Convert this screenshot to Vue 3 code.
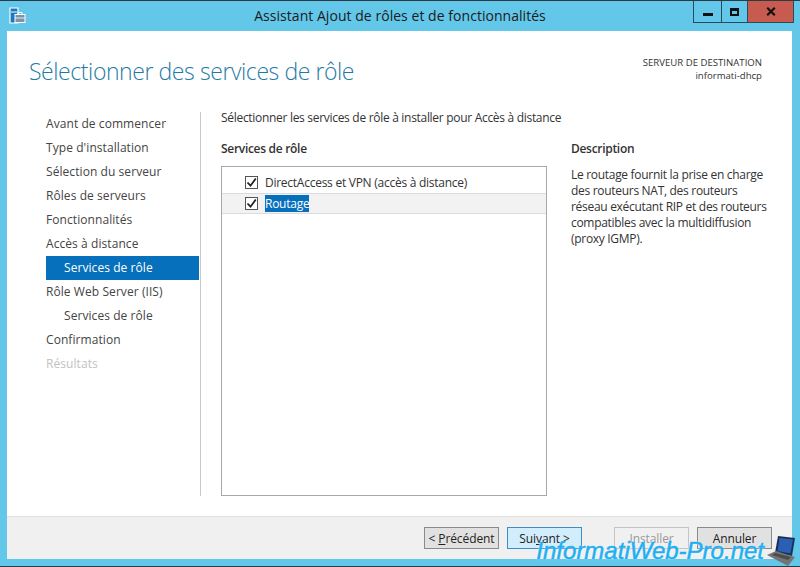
<script setup>
const steps = [
  { label: "Avant de commencer" },
  { label: "Type d'installation" },
  { label: "Sélection du serveur" },
  { label: "Rôles de serveurs" },
  { label: "Fonctionnalités" },
  { label: "Accès à distance" },
  { label: "Services de rôle", sub: true, active: true },
  { label: "Rôle Web Server (IIS)" },
  { label: "Services de rôle", sub: true },
  { label: "Confirmation" },
  { label: "Résultats", off: true }
];
</script>

<template>
  <div class="window">
    <header class="titlebar">
      <svg class="appicon" width="17" height="17" viewBox="0 0 17 17">
        <path d="M1 1h8v15H1z" fill="#1a78c4" stroke="#fff" stroke-width="1.2"/>
        <path d="M2 5h6" stroke="#fff" stroke-width="1"/>
        <rect x="6" y="7.5" width="10" height="8" fill="#7d94a8" stroke="#fff" stroke-width="1"/>
        <path d="M9 7.500V5.500h4v2" fill="none" stroke="#fff" stroke-width="1"/>
        <path d="M6 11h10" stroke="#fff" stroke-width=".8"/>
      </svg>
      <div class="wintitle">Assistant Ajout de rôles et de fonctionnalités</div>
      <div class="controls">
        <div class="ctl"><span class="min"></span></div>
        <div class="ctl"><span class="max"></span></div>
        <div class="ctl close">
          <svg width="10" height="9" viewBox="0 0 10 9"><path d="M1.200.8l7.600 7.400M8.800.8L1.200 8.200" stroke="#111" stroke-width="2.200"/></svg>
        </div>
      </div>
    </header>

    <div class="client">
      <div class="head">
        <h1>Sélectionner des services de rôle</h1>
        <div class="dest">
          <div>SERVEUR DE DESTINATION</div>
          <div>informati-dhcp</div>
        </div>
      </div>

      <div class="body">
        <nav class="nav">
          <div
            v-for="s in steps"
            :key="s.label + s.sub"
            class="step"
            :class="{ sub: s.sub, active: s.active, off: s.off }"
          >{{ s.label }}</div>
        </nav>

        <main class="content">
          <div class="intro">Sélectionner les services de rôle à installer pour Accès à distance</div>
          <div class="cols">
            <section class="left">
              <h2>Services de rôle</h2>
              <div class="list">
                <div class="row">
                  <span class="check"><svg width="11" height="11" viewBox="0 0 11 11"><path d="M1.500 5.500l3 3.200L9.800 1.500" fill="none" stroke="#222" stroke-width="1.800"/></svg></span>
                  <span>DirectAccess et VPN (accès à distance)</span>
                </div>
                <div class="row selected">
                  <span class="check"><svg width="11" height="11" viewBox="0 0 11 11"><path d="M1.500 5.500l3 3.200L9.800 1.500" fill="none" stroke="#222" stroke-width="1.800"/></svg></span>
                  <span class="hl">Routage</span>
                </div>
              </div>
            </section>
            <section class="right">
              <h2>Description</h2>
              <p>Le routage fournit la prise en charge des routeurs NAT, des routeurs réseau exécutant RIP et des routeurs compatibles avec la multidiffusion (proxy IGMP).</p>
            </section>
          </div>
        </main>
      </div>

      <footer class="footer">
        <button class="btn"><span>&lt; <u>P</u>récédent</span></button>
        <button class="btn primary"><span>Sui<u>v</u>ant &gt;</span></button>
        <button class="btn disabled install"><span>Installer</span></button>
        <button class="btn"><span>Annuler</span></button>
      </footer>
    </div>

    <span class="marktext">InformatiWeb-Pro.net</span>
    <svg class="laptop" width="30" height="30" viewBox="0 0 30 30">
      <path d="M11 0l17 2-3 18-17-3z" fill="#1c2f55"/>
      <path d="M12.500 2l13.500 1.500-2.500 14-13-2.500z" fill="#2a5fb4"/>
      <path d="M0 19l9-4 19 6-7 9z" fill="#737476"/>
      <path d="M8 17l16 4-3 3-16-5z" fill="#4a4c50"/>
    </svg>
  </div>
</template>

<style>
html, body { margin: 0; padding: 0; background: #2b2b2b; }
</style>

<style scoped>
.window {
  position: relative;
  width: 800px;
  height: 567px;
  box-sizing: border-box;
  display: flex;
  flex-direction: column;
  background: #63c7ea;
  border-top: 1px solid #2d3a42;
  border-bottom: 1px solid #2d3a42;
  padding: 0 8px 7px 7px;
  font-family: "Open Sans", "Noto Sans", sans-serif;
  font-size: 12px;
  color: #333;
  overflow: hidden;
}
.titlebar {
  height: 30px;
  flex: none;
  margin-left: -7px;
  margin-right: -8px;
  position: relative;
  display: flex;
  justify-content: center;
}
.appicon { position: absolute; left: 9px; top: 6px; }
.wintitle {
  font-size: 14px;
  color: #1b1b1b;
  line-height: 30px;
  letter-spacing: 0.04px;
}
.controls {
  position: absolute;
  top: 0;
  right: 6px;
  display: flex;
  height: 21px;
  border: 1px solid #2d4a58;
  border-top: 0;
}
.ctl {
  width: 27px;
  display: flex;
  align-items: center;
  justify-content: center;
  border-right: 1px solid #2d4a58;
}
.ctl:nth-child(2) { width: 25px; }
.ctl.close {
  width: 45px;
  border-right: 0;
  background: #c75b50;
}
.min { width: 10px; height: 3px; background: #111; margin-top: 5px; }
.max { width: 5px; height: 3px; border: 2px solid #111; border-top-width: 3px; }

.client {
  flex: 1;
  min-height: 0;
  background: #fff;
  display: flex;
  flex-direction: column;
}
.head {
  height: 80px;
  flex: none;
  display: flex;
  justify-content: space-between;
  box-sizing: border-box;
  padding: 0 30px 0 22px;
}
h1 {
  margin: 24px 0 0;
  font-size: 23px;
  font-weight: 300;
  line-height: 32px;
  color: #1f7ba6;
  letter-spacing: -0.42px;
}
.dest {
  margin-top: 25px;
  text-align: right;
  font-size: 9.600px;
  line-height: 13px;
  color: #333;
}
.body {
  flex: 1;
  min-height: 0;
  display: flex;
  padding-top: 1px;
}
.nav {
  width: 194px;
  box-sizing: border-box;
  flex: none;
  margin-bottom: 20px;
  padding-left: 39px;
  border-right: 1px solid #c9c9c9;
  padding-right: 1px;
}
.step {
  height: 24px;
  line-height: 24px;
  color: #444;
  letter-spacing: 0.07px;
}
.step.sub { padding-left: 18px; }
.step.active { background: #0670bc; color: #fff; }
.step.off { color: #c2c2c2; }
.content {
  flex: 1;
  min-width: 0;
  padding: 0 0 0 20px;
  display: flex;
  flex-direction: column;
}
.intro {
  line-height: 14px;
  margin-top: -1px;
  color: #333;
  letter-spacing: -0.3px;
}
.cols {
  display: flex;
  flex: 1;
  min-height: 0;
  margin-top: 16px;
}
.left { width: 326px; flex: none; }
h2 {
  margin: 0;
  font-size: 12px;
  font-weight: 600;
  line-height: 16px;
  color: #333;
  letter-spacing: -0.3px;
}
.list {
  margin-top: 9px;
  width: 326px;
  height: 330px;
  box-sizing: border-box;
  border: 1px solid #a9a9a9;
  padding-top: 5px;
}
.row {
  height: 21px;
  display: flex;
  align-items: center;
  padding-left: 23px;
  gap: 7px;
  color: #333;
  letter-spacing: -0.26px;
}
.row.selected {
  box-sizing: border-box;
  background: #f2f2f2;
  border-top: 1px solid #dcdcdc;
  border-bottom: 1px solid #dcdcdc;
}
.check {
  width: 11px;
  height: 11px;
  border: 1px solid #555;
  background: #fff;
  display: flex;
  align-items: center;
  justify-content: center;
}
.hl { background: #0670bc; color: #fff; }
.right { margin-left: 24px; width: 196px; flex: none; }
.right p {
  margin: 10px 0 0;
  line-height: 16px;
  color: #333;
  letter-spacing: -0.3px;
}
.footer {
  height: 43px;
  flex: none;
  box-sizing: border-box;
  background: #f0f0f0;
  border-top: 1px solid #dfdfdf;
  display: flex;
  justify-content: flex-end;
  align-items: flex-start;
  padding: 10px 20px 0 0;
  gap: 8px;
}
.btn {
  width: 75px;
  height: 22px;
  padding: 0;
  box-sizing: border-box;
  border: 1px solid #8a8a8a;
  background: #e1e1e1;
  font: inherit;
  color: #222;
  letter-spacing: -0.1px;
}
.btn.primary { background: #d2edfb; border-color: #3a8fc8; }
.btn.disabled { background: #f0f0f0; border-color: #c4c4c4; color: #9a9a9a; }
.btn.install { margin-left: 24px; }
.marktext {
  position: absolute;
  right: 36px;
  top: 535px;
  font-family: "Liberation Sans", sans-serif;
  font-style: italic;
  font-size: 24px;
  line-height: 30px;
  color: #1fb0f2;
  -webkit-text-stroke: 0.5px #1fb0f2;
  text-shadow: 0 0 2px #fff;
}
.laptop {
  position: absolute;
  right: 3px;
  bottom: 0;
  display: block;
}
</style>
